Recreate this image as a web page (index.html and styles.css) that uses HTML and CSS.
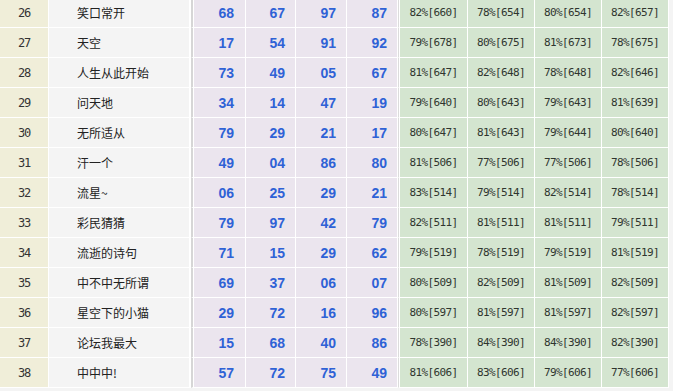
FILE: index.html
```html
<!DOCTYPE html>
<html lang="zh-CN">
<head>
<meta charset="utf-8">
<title>排行</title>
<link rel="stylesheet" href="styles.css">
</head>
<body>
<table class="board">
<tbody>
<tr><td class="no">26</td><td class="name">笑口常开</td><td class="p p1">68</td><td class="p p2">67</td><td class="p p3">97</td><td class="p p4">87</td><td class="g g1">82%[660]</td><td class="g g2">78%[654]</td><td class="g g3">80%[654]</td><td class="g g4">82%[657]</td></tr>
<tr><td class="no">27</td><td class="name">天空</td><td class="p p1">17</td><td class="p p2">54</td><td class="p p3">91</td><td class="p p4">92</td><td class="g g1">79%[678]</td><td class="g g2">80%[675]</td><td class="g g3">81%[673]</td><td class="g g4">78%[675]</td></tr>
<tr><td class="no">28</td><td class="name">人生从此开始</td><td class="p p1">73</td><td class="p p2">49</td><td class="p p3">05</td><td class="p p4">67</td><td class="g g1">81%[647]</td><td class="g g2">82%[648]</td><td class="g g3">78%[648]</td><td class="g g4">82%[646]</td></tr>
<tr><td class="no">29</td><td class="name">问天地</td><td class="p p1">34</td><td class="p p2">14</td><td class="p p3">47</td><td class="p p4">19</td><td class="g g1">79%[640]</td><td class="g g2">80%[643]</td><td class="g g3">79%[643]</td><td class="g g4">81%[639]</td></tr>
<tr><td class="no">30</td><td class="name">无所适从</td><td class="p p1">79</td><td class="p p2">29</td><td class="p p3">21</td><td class="p p4">17</td><td class="g g1">80%[647]</td><td class="g g2">81%[643]</td><td class="g g3">79%[644]</td><td class="g g4">80%[640]</td></tr>
<tr><td class="no">31</td><td class="name">汗一个</td><td class="p p1">49</td><td class="p p2">04</td><td class="p p3">86</td><td class="p p4">80</td><td class="g g1">81%[506]</td><td class="g g2">77%[506]</td><td class="g g3">77%[506]</td><td class="g g4">78%[506]</td></tr>
<tr><td class="no">32</td><td class="name">流星~</td><td class="p p1">06</td><td class="p p2">25</td><td class="p p3">29</td><td class="p p4">21</td><td class="g g1">83%[514]</td><td class="g g2">79%[514]</td><td class="g g3">82%[514]</td><td class="g g4">78%[514]</td></tr>
<tr><td class="no">33</td><td class="name">彩民猜猜</td><td class="p p1">79</td><td class="p p2">97</td><td class="p p3">42</td><td class="p p4">79</td><td class="g g1">82%[511]</td><td class="g g2">81%[511]</td><td class="g g3">81%[511]</td><td class="g g4">79%[511]</td></tr>
<tr><td class="no">34</td><td class="name">流逝的诗句</td><td class="p p1">71</td><td class="p p2">15</td><td class="p p3">29</td><td class="p p4">62</td><td class="g g1">79%[519]</td><td class="g g2">78%[519]</td><td class="g g3">79%[519]</td><td class="g g4">81%[519]</td></tr>
<tr><td class="no">35</td><td class="name">中不中无所谓</td><td class="p p1">69</td><td class="p p2">37</td><td class="p p3">06</td><td class="p p4">07</td><td class="g g1">80%[509]</td><td class="g g2">82%[509]</td><td class="g g3">81%[509]</td><td class="g g4">82%[509]</td></tr>
<tr><td class="no">36</td><td class="name">星空下的小猫</td><td class="p p1">29</td><td class="p p2">72</td><td class="p p3">16</td><td class="p p4">96</td><td class="g g1">80%[597]</td><td class="g g2">81%[597]</td><td class="g g3">81%[597]</td><td class="g g4">82%[597]</td></tr>
<tr><td class="no">37</td><td class="name">论坛我最大</td><td class="p p1">15</td><td class="p p2">68</td><td class="p p3">40</td><td class="p p4">86</td><td class="g g1">78%[390]</td><td class="g g2">84%[390]</td><td class="g g3">84%[390]</td><td class="g g4">82%[390]</td></tr>
<tr><td class="no">38</td><td class="name">中中中!</td><td class="p p1">57</td><td class="p p2">72</td><td class="p p3">75</td><td class="p p4">49</td><td class="g g1">81%[606]</td><td class="g g2">83%[606]</td><td class="g g3">79%[606]</td><td class="g g4">77%[606]</td></tr>
</tbody>
</table>
</body>
</html>
```
FILE: styles.css
```css
html, body {
  margin: 0;
  padding: 0;
  background: #f4f4f4;
}

.board {
  margin-top: -2px;
  border-collapse: separate;
  border-spacing: 0;
  table-layout: fixed;
  width: 669px;
  font-family: "Liberation Sans", "Noto Sans CJK SC", sans-serif;
  font-size: 12px;
  color: #333;
}

.board td {
  box-sizing: border-box;
  height: 30px;
  padding: 0;
  border-bottom: 1px solid #fff;
  border-right: 1px solid #fff;
  vertical-align: middle;
  white-space: nowrap;
  overflow: hidden;
}

.no {
  width: 49px;
  background: #f0eed9;
  text-align: center;
  color: #333;
  font-family: "DejaVu Sans Mono", monospace;
  font-size: 12px;
  letter-spacing: -1.2px;
}

.name {
  width: 142px;
  background: #f4f4f4;
  text-align: left;
  padding-left: 28px !important;
  color: #222;
  font-family: "Noto Sans CJK SC", "Liberation Sans", sans-serif;
}

.board td.name {
  border-right: 2px solid #fff;
}

.p {
  background: #ebe5ee;
  text-align: right;
  padding-right: 10px !important;
  font-size: 14px;
  font-weight: bold;
  color: #2f62d6;
}

.p1 { width: 55px; border-left: 2px solid #d6d6d6; box-shadow: inset 1px 0 0 #fff; padding-right: 11px !important; }
.p2 { width: 50px; }
.p3 { width: 51px; }
.p4 { width: 51px; }

.g {
  background: #d4e5d0;
  text-align: center;
  color: #2f352f;
  font-family: "DejaVu Sans Mono", monospace;
  font-size: 11px;
  letter-spacing: -0.6px;
}

.g1 { width: 70px; border-left: 1px solid #dcdcdc; box-shadow: inset 1px 0 0 #fff; padding-left: 1px !important; }
.g2, .g3, .g4 { width: 67px; }
```
